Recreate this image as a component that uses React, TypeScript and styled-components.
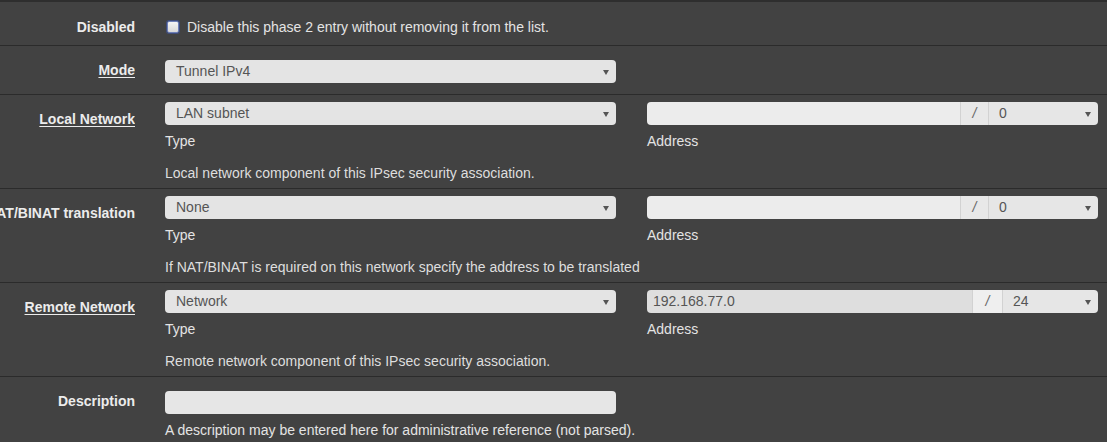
import styled, { createGlobalStyle } from "styled-components";

const GlobalStyle = createGlobalStyle`
  html, body {
    margin: 0;
    padding: 0;
    background: #424242;
  }
  body {
    font-family: "Liberation Sans", Arial, sans-serif;
    font-size: 14px;
    line-height: 20px;
    color: #e2e2e2;
  }
`;

interface RowProp {
  $pad: number;
  $height: number;
}

interface LabelProp {
  $top: number;
  $link?: boolean;
}

interface FieldProp {
  $width: number;
  $filled?: boolean;
}

const Panel = styled.div`
  width: 1107px;
  height: 442px;
  overflow: hidden;
  border-top: 2px solid #2e2e2e;
  box-sizing: border-box;
`;

const Row = styled.div<RowProp>`
  display: grid;
  grid-template-columns: 135px 1fr;
  column-gap: 30px;
  align-items: start;
  height: ${(p) => p.$height}px;
  padding-top: ${(p) => p.$pad}px;
  box-sizing: border-box;
  border-bottom: 1px solid #2b2b2b;

  &:last-child {
    border-bottom: none;
  }
`;

const Label = styled.div<LabelProp>`
  padding-top: ${(p) => p.$top}px;
  text-align: right;
  font-weight: bold;
  color: #ececec;
  white-space: nowrap;
  direction: rtl;
  overflow: hidden;
  text-decoration: ${(p) => (p.$link ? "underline" : "none")};
  text-underline-offset: 2px;
`;

const Content = styled.div`
  display: flex;
  flex-direction: column;
`;

const Pair = styled.div`
  display: flex;
  gap: 31px;
`;

const Column = styled.div`
  display: flex;
  flex-direction: column;
`;

const Select = styled.div<FieldProp>`
  position: relative;
  width: ${(p) => p.$width}px;
  height: 23px;
  box-sizing: border-box;
  padding-left: 11px;
  background: #e4e4e4;
  border-radius: 4px;
  color: #555;
  line-height: 23px;

  &::after {
    content: "";
    position: absolute;
    right: 7px;
    top: 10px;
    border-left: 3px solid transparent;
    border-right: 3px solid transparent;
    border-top: 5px solid #555;
  }
`;

const TextInput = styled.div<FieldProp>`
  width: ${(p) => p.$width}px;
  height: 23px;
  box-sizing: border-box;
  padding-left: 6px;
  background: ${(p) => (p.$filled ? "#dedede" : "#e6e6e6")};
  border-radius: 4px;
  color: #555;
  line-height: 23px;
`;

const Group = styled.div`
  display: flex;
  width: 451px;
  height: 23px;
`;

const GroupInput = styled.div<{ $filled?: boolean }>`
  flex: 1;
  padding-left: 6px;
  background: ${(p) => (p.$filled ? "#dedede" : "#ececec")};
  border-radius: 4px 0 0 4px;
  color: #555;
  line-height: 23px;
`;

const Addon = styled.div<{ $filled?: boolean }>`
  width: ${(p) => (p.$filled ? 31 : 29)}px;
  box-sizing: border-box;
  text-align: center;
  background: ${(p) => (p.$filled ? "#efefef" : "#e8e8e8")};
  border-left: 1px solid #d2d2d2;
  border-right: 1px solid #d2d2d2;
  color: #666;
  font-style: italic;
  line-height: 23px;
`;

const GroupSelect = styled(Select)`
  border-radius: 0 4px 4px 0;
  padding-left: 10px;
  background: #e6e6e6;
`;

const Caption = styled.div`
  margin-top: 6px;
  color: #e4e4e4;
`;

const Help = styled.div<{ $gap: number }>`
  margin-top: ${(p) => p.$gap}px;
  color: #dedede;
`;

const CheckLine = styled.label`
  display: flex;
  align-items: center;
  gap: 8px;
  height: 20px;
  color: #e4e4e4;
`;

const Box = styled.span`
  width: 10px;
  height: 10px;
  border: 1px solid #6d7fb8;
  border-radius: 2px;
  background: linear-gradient(#f4f4f4, #d8d8d8);
  box-shadow: 0 0 0 1px #3f4c7a;
  margin-left: 2px;
`;

interface NetworkProp {
  type: string;
  address?: string;
  mask: string;
  help: string;
}

const NetworkFields = ({ type, address, mask, help }: NetworkProp) => (
  <Content>
    <Pair>
      <Column>
        <Select $width={451}>{type}</Select>
        <Caption>Type</Caption>
      </Column>
      <Column>
        <Group>
          <GroupInput $filled={!!address}>{address}</GroupInput>
          <Addon $filled={!!address}>/</Addon>
          <GroupSelect $width={address ? 95 : 109}>{mask}</GroupSelect>
        </Group>
        <Caption>Address</Caption>
      </Column>
    </Pair>
    <Help $gap={12}>{help}</Help>
  </Content>
);

export default function App() {
  return (
    <>
      <GlobalStyle />
      <Panel>
        <Row $pad={15} $height={44}>
          <Label $top={0}>Disabled</Label>
          <CheckLine>
            <Box />
            Disable this phase 2 entry without removing it from the list.
          </CheckLine>
        </Row>
        <Row $pad={14} $height={49}>
          <Label $top={0} $link>
            Mode
          </Label>
          <Content>
            <Select $width={451}>Tunnel IPv4</Select>
          </Content>
        </Row>
        <Row $pad={7} $height={94}>
          <Label $top={7} $link>
            Local Network
          </Label>
          <NetworkFields
            type="LAN subnet"
            mask="0"
            help="Local network component of this IPsec security association."
          />
        </Row>
        <Row $pad={7} $height={94}>
          <Label $top={7}>NAT/BINAT translation</Label>
          <NetworkFields
            type="None"
            mask="0"
            help="If NAT/BINAT is required on this network specify the address to be translated"
          />
        </Row>
        <Row $pad={7} $height={94}>
          <Label $top={7} $link>
            Remote Network
          </Label>
          <NetworkFields
            type="Network"
            address="192.168.77.0"
            mask="24"
            help="Remote network component of this IPsec security association."
          />
        </Row>
        <Row $pad={14} $height={66}>
          <Label $top={0}>Description</Label>
          <Content>
            <TextInput $width={451} />
            <Caption>
              A description may be entered here for administrative reference (not parsed).
            </Caption>
          </Content>
        </Row>
      </Panel>
    </>
  );
}
